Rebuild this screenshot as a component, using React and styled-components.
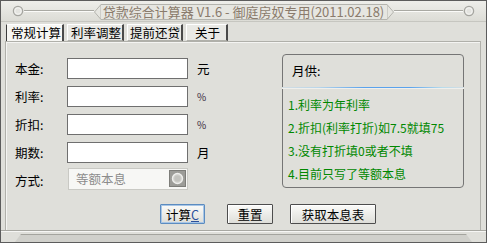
import React from 'react';
import styled, { createGlobalStyle } from 'styled-components';

const GlobalStyle = createGlobalStyle`
  html, body {
    margin: 0;
    padding: 0;
    background: #dfdfda;
  }
`;

const Window = styled.div`
  width: 487px;
  height: 243px;
  box-sizing: border-box;
  border: 1px solid #5c5c5c;
  background: #dfdfda;
  display: flex;
  flex-direction: column;
  font-family: "Noto Sans CJK SC", "DejaVu Sans", sans-serif;
  font-size: 12px;
  color: #000;
  overflow: hidden;
`;

const TitleBar = styled.div`
  height: 20px;
  flex: none;
  display: flex;
  align-items: center;
  padding: 0 11px;
  background: linear-gradient(#eeeeea, #dcdcd6);
  border-bottom: 1px solid #c6c6c0;
`;

const Rule = styled.div`
  flex: 1;
  height: 0;
  border-top: 1px solid #a9a9a3;
  border-bottom: 1px solid #fbfbf9;
`;

const TitleBadge = styled.div`
  width: 300px;
  height: 16px;
  flex: none;
  display: flex;
  align-items: stretch;
  margin-top: 1px;
`;

const TitleText = styled.div`
  flex: 1;
  box-sizing: border-box;
  border-top: 1px solid #b4b4ae;
  border-bottom: 1px solid #b4b4ae;
  background: #e6e6e1;
  color: #8a7b6c;
  font-size: 13px;
  line-height: 14px;
  text-align: center;
  white-space: nowrap;
`;

const Knob = () => (
  <svg width="12" height="12" viewBox="0 0 12 12">
    <circle cx="6" cy="6" r="4.6" fill="#e4e4e0" stroke="#a5a5a0" strokeWidth="1.3" />
    <circle cx="6" cy="6" r="3.2" fill="none" stroke="#f8f8f6" strokeWidth="0.8" />
  </svg>
);

const Cap = ({ side }) => (
  <svg width="7" height="16" viewBox="0 0 7 16">
    {side === 'left' ? (
      <polygon points="7,0.5 0.5,8 7,15.5" fill="#e6e6e1" stroke="#b4b4ae" strokeWidth="1" />
    ) : (
      <polygon points="0,0.5 6.5,8 0,15.5" fill="#e6e6e1" stroke="#b4b4ae" strokeWidth="1" />
    )}
  </svg>
);

const TabRow = styled.div`
  display: flex;
  gap: 3px;
  padding-left: 5px;
  margin-top: 1px;
  height: 18px;
  flex: none;
  align-items: flex-end;
`;

const Tab = styled.div`
  box-sizing: border-box;
  width: ${(p) => p.$w}px;
  height: 17px;
  line-height: 15px;
  font-size: 12.5px;
  white-space: nowrap;
  overflow: hidden;
  padding-left: ${(p) => p.$pl}px;
  background: ${(p) => (p.$active ? '#f6f6f3' : '#e9e9e5')};
  border-top: 1px solid #ffffff;
  border-left: 1px solid ${(p) => (p.$active ? '#3c3c3c' : '#ffffff')};
  border-right: 2px solid #4a4a4a;
  border-bottom: ${(p) => (p.$active ? 'none' : '1px solid #b0b0aa')};
`;

const Panel = styled.div`
  flex: 1;
  margin: 0 5px 0 4px;
  border: 1px solid #b0b0aa;
  border-bottom: none;
  box-shadow: inset 1px 1px 0 #f4f4f2;
  padding: 12px 0 0 9px;
  display: flex;
  flex-direction: column;
`;

const Main = styled.div`
  display: flex;
  align-items: flex-start;
`;

const Form = styled.div`
  width: 267px;
  margin-top: 4px;
  display: grid;
  grid-template-columns: 52px 121px auto;
  grid-auto-rows: 21px;
  row-gap: 7px;
  align-items: center;
`;

const Label = styled.span`
  font-size: 12.5px;
`;

const Field = styled.div`
  box-sizing: border-box;
  height: 21px;
  background: #ffffff;
  border: 1px solid #6f6f6f;
`;

const Unit = styled.span`
  margin-left: 9px;
  font-size: ${(p) => (p.$small ? 10 : 12.5)}px;
  color: ${(p) => (p.$small ? '#3a2a3a' : '#000')};
`;

const Combo = styled.div`
  box-sizing: border-box;
  height: 22px;
  margin-top: -4px;
  margin-left: 1px;
  display: flex;
  align-items: center;
  border: 1px solid #c9c9c4;
  background: #f7f7f5;
  padding: 1px;
`;

const ComboText = styled.span`
  flex: 1;
  padding-left: 6px;
  color: #8c8c8c;
  font-size: 12.5px;
`;

const ComboButton = styled.div`
  width: 17px;
  height: 17px;
  display: flex;
  align-items: center;
  justify-content: center;
  background: #9c9c98;
  border: 1px solid #7d7d79;
  box-sizing: border-box;
`;

const GroupBox = styled.div`
  width: 182px;
  height: 134px;
  box-sizing: border-box;
  border: 1px solid #757575;
  border-radius: 4px;
  display: flex;
  flex-direction: column;
`;

const GroupHead = styled.div`
  height: 32px;
  line-height: 32px;
  padding-left: 9px;
  font-size: 12.5px;
  flex: none;
`;

const Divider = styled.div`
  height: 1px;
  margin: 0 -1px;
  background: linear-gradient(90deg, #d4dde2 0%, #b9d6ea 20%, #5aa2ec 45%, #5aa2ec 70%, #b8dcec 88%, #d4dde2 100%);
  border-bottom: 1px solid #efefec;
`;

const Notes = styled.div`
  padding: 4px 0 0 5px;
  color: #008800;
  font-size: 12px;
  line-height: 23px;
`;

const ButtonRow = styled.div`
  display: flex;
  margin-top: 13px;
  padding-left: 145px;
`;

const Button = styled.div`
  box-sizing: border-box;
  width: ${(p) => p.$w}px;
  height: 20px;
  margin-left: ${(p) => p.$ml || 0}px;
  display: flex;
  align-items: center;
  justify-content: center;
  font-size: 12.5px;
  border: 1px solid ${(p) => (p.$focus ? '#5c8cc0' : '#4d4d4d')};
  box-shadow: ${(p) => (p.$focus ? 'inset 0 0 0 1px #a8c6e6' : 'inset 1px 1px 0 #ffffff')};
  background: linear-gradient(#fbfbf9, #deded9);
  border-radius: 1px;
`;

const Key = styled.span`
  text-decoration: underline;
  color: #2a4f9a;
`;

const Footer = styled.div`
  height: 11px;
  flex: none;
  border-top: 1px solid #a8a8a2;
  box-shadow: inset 0 1px 0 #f6f6f4;
  display: flex;
  flex-direction: column;
  justify-content: flex-end;
`;

const Tray = styled.div`
  height: 7px;
  margin: 0 14px 0 14px;
  background: #d0d0cb;
  border-top: 1px solid #a4a49e;
  clip-path: polygon(6px 0, calc(100% - 6px) 0, 100% 100%, 0 100%);
`;

const ComboGlyph = () => (
  <svg width="13" height="13" viewBox="0 0 13 13">
    <circle cx="6.5" cy="6.5" r="5" fill="#cfcfcb" stroke="#eeeeec" strokeWidth="1.4" />
    <circle cx="6.5" cy="6.5" r="3" fill="#c2c2be" />
  </svg>
);

const rows = [
  { label: '本金:', unit: '元' },
  { label: '利率:', unit: '%', small: true },
  { label: '折扣:', unit: '%', small: true },
  { label: '期数:', unit: '月' },
];

const notes = [
  '1.利率为年利率',
  '2.折扣(利率打折)如7.5就填75',
  '3.没有打折填0或者不填',
  '4.目前只写了等额本息',
];

export default function App() {
  return (
    <>
      <GlobalStyle />
      <Window>
        <TitleBar>
          <Knob />
          <Rule />
          <TitleBadge>
            <Cap side="left" />
            <TitleText>贷款综合计算器 V1.6 - 御庭房奴专用(2011.02.18)</TitleText>
            <Cap side="right" />
          </TitleBadge>
          <Rule />
          <Knob />
        </TitleBar>

        <TabRow>
          <Tab $w={58} $pl={4} $active>常规计算</Tab>
          <Tab $w={57} $pl={3}>利率调整</Tab>
          <Tab $w={56} $pl={2}>提前还贷</Tab>
          <Tab $w={42} $pl={8}>关于</Tab>
        </TabRow>

        <Panel>
          <Main>
            <Form>
              {rows.map((r) => (
                <React.Fragment key={r.label}>
                  <Label>{r.label}</Label>
                  <Field />
                  <Unit $small={r.small}>{r.unit}</Unit>
                </React.Fragment>
              ))}
              <Label>方式:</Label>
              <Combo>
                <ComboText>等额本息</ComboText>
                <ComboButton>
                  <ComboGlyph />
                </ComboButton>
              </Combo>
              <span />
            </Form>

            <GroupBox>
              <GroupHead>月供:</GroupHead>
              <Divider />
              <Notes>
                {notes.map((n) => (
                  <div key={n}>{n}</div>
                ))}
              </Notes>
            </GroupBox>
          </Main>

          <ButtonRow>
            <Button $w={45} $focus>
              计算<Key>C</Key>
            </Button>
            <Button $w={46} $ml={22}>重置</Button>
            <Button $w={86} $ml={17}>获取本息表</Button>
          </ButtonRow>
        </Panel>

        <Footer>
          <Tray />
        </Footer>
      </Window>
    </>
  );
}
